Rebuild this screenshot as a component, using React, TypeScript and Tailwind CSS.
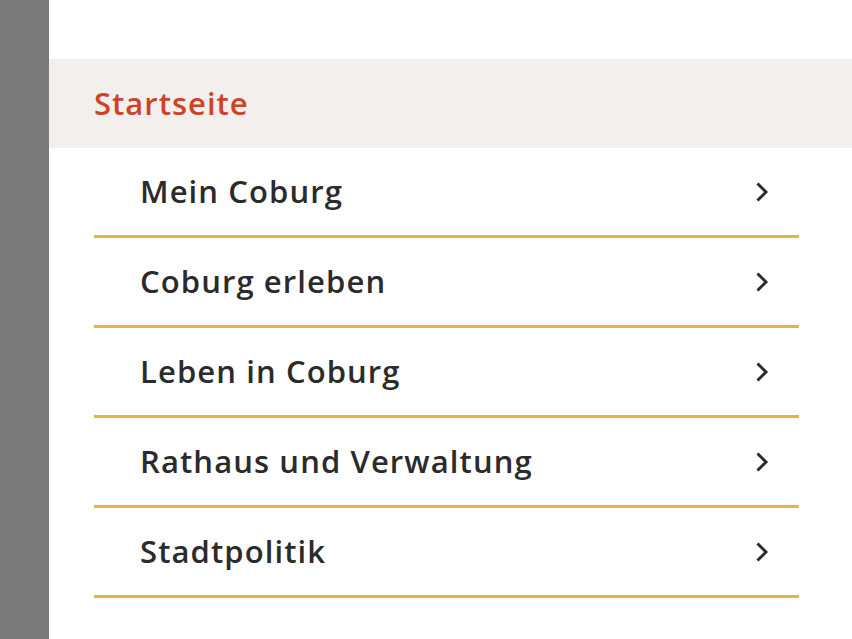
const items = ['Mein Coburg', 'Coburg erleben', 'Leben in Coburg', 'Rathaus und Verwaltung', 'Stadtpolitik'];

function ChevronIcon({ className }: { className?: string }) {
  return (
    <svg viewBox="0 0 14 22" fill="none" stroke="currentColor" strokeWidth="3" className={className}>
      <polyline points="2.5 2.5 11 11 2.5 19.5" />
    </svg>
  );
}

export default function App() {
  return (
    <div className="flex h-[639px] w-full overflow-hidden bg-white" style={{ fontFamily: '"Open Sans", "Noto Sans", sans-serif' }}>
      <div className="w-[49px] shrink-0 bg-[#7a7a7a]" />
      <div className="flex-1 pt-[59px]">
        {/* Active top level */}
        <div className="flex h-[89px] items-center bg-[#f2efec] pl-[45px]">
          <span className="text-[31px] font-semibold tracking-[1px] text-[#cc4328]">Startseite</span>
        </div>

        <ul className="ml-[45px] w-[705px]">
          {items.map((item) => (
            <li key={item} className="border-b-[3px] border-[#e4b63b]">
              <a href="#" className="flex h-[87px] items-center justify-between pl-[46px] pr-[30px] text-[#2b2b2b]">
                <span className="text-[31px] font-semibold tracking-[1.1px]">{item}</span>
                <ChevronIcon className="h-[22px] w-[14px]" />
              </a>
            </li>
          ))}
        </ul>
      </div>
    </div>
  );
}
